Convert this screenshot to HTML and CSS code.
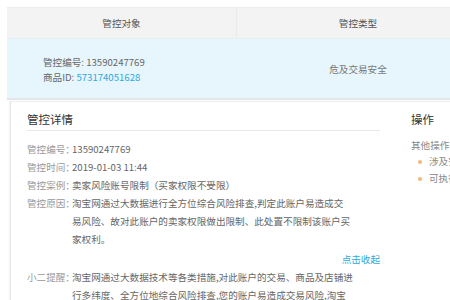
FILE: index.html
```html
<!DOCTYPE html>
<html lang="zh">
<head>
<meta charset="utf-8">
<link rel="stylesheet" href="styles.css">
</head>
<body>
<div class="page">
  <div class="table">
    <div class="row head">
      <div class="cell c1">管控对象</div>
      <div class="cell c2">管控类型</div>
    </div>
    <div class="row body">
      <div class="cell c1 obj">
        <div>管控编号: 13590247769</div>
        <div>商品ID: <span class="link">573174051628</span></div>
      </div>
      <div class="cell c2">危及交易安全</div>
    </div>
  </div>
  <div class="panel">
    <div class="detail">
      <div class="title">管控详情</div>
      <div class="item"><span class="lab">管控编号：</span><span class="val">13590247769</span></div>
      <div class="item"><span class="lab">管控时间：</span><span class="val">2019-01-03 11:44</span></div>
      <div class="item"><span class="lab">管控案例：</span><span class="val">卖家风险账号限制（买家权限不受限）</span></div>
      <div class="item"><span class="lab">管控原因：</span><span class="val">淘宝网通过大数据进行全方位综合风险排查,判定此账户易造成交<br>易风险、故对此账户的卖家权限做出限制、此处置不限制该账户买<br>家权利。</span></div>
      <div class="toggle"><span class="link">点击收起</span></div>
      <div class="item"><span class="lab">小二提醒：</span><span class="val">淘宝网通过大数据技术等各类措施,对此账户的交易、商品及店铺进<br>行多纬度、全方位地综合风险排查,您的账户易造成交易风险,淘宝</span></div>
    </div>
    <div class="ops">
      <div class="title">操作</div>
      <div class="other">其他操作</div>
      <ul class="bul">
        <li>涉及安全问题</li>
        <li>可执行操作</li>
      </ul>
    </div>
  </div>
</div>
</body>
</html>
```
FILE: styles.css
```css
html, body {
  margin: 0;
  padding: 0;
  background: #fff;
  overflow: hidden;
}
body {
  font-family: "Noto Sans CJK SC", "Noto Sans", sans-serif;
  font-size: 9.6px;
  color: #666;
  width: 450px;
  height: 300px;
}
.page {
  padding: 7px 0 0 7px;
  width: 520px;
}
.table {
  width: 472px;
  border-bottom: 2px solid #e3e6e8;
}
.row {
  display: flex;
}
.cell {
  box-sizing: border-box;
}
.c1 { width: 230px; }
.c2 { width: 242px; }
.head {
  height: 30px;
  background: #f3f3f3;
  border-bottom: 1px solid #e6eef2;
  border-top: 1px solid #ececec;
}
.head .cell {
  display: flex;
  align-items: center;
  justify-content: center;
  color: #555;
}
.head .c1 { border-right: 1px solid #ebebeb; }
.body {
  height: 59px;
  background: #e7f6fd;
}
.body .c2 {
  display: flex;
  align-items: center;
  justify-content: center;
  color: #777;
}
.obj {
  padding: 16px 0 0 36px;
  line-height: 15px;
  color: #666;
}
.link { color: #2fa8dc; }
.panel {
  display: flex;
  margin: 1px 0 0 3px;
  border-left: 1px solid #e4e4e4;
  border-top: 1px solid #eeeeee;
  box-shadow: -1px 0 2px rgba(0,0,0,0.05);
  height: 220px;
}
.detail {
  width: 353px;
  padding: 8px 0 0 16px;
}
.title {
  font-size: 11.5px;
  color: #333;
  line-height: 19px;
  padding-bottom: 1px;
}
.detail .title {
  border-bottom: 1px solid #e8e8e8;
  margin-bottom: 9px;
}
.item {
  display: flex;
  line-height: 18px;
}
.lab {
  color: #999;
  width: 45px;
  flex: none;
  white-space: nowrap;
}
.val {
  color: #666;
  white-space: nowrap;
}
.toggle {
  text-align: right;
  line-height: 18px;
  margin-top: 2px;
}
.ops {
  padding: 8px 0 0 31px;
  white-space: nowrap;
}
.ops .title {
  margin-bottom: 8px;
}
.other {
  color: #888;
  line-height: 15px;
}
.bul {
  list-style: none;
  margin: 0;
  padding: 0 0 0 7px;
}
.bul li {
  line-height: 17px;
  color: #888;
  display: flex;
  align-items: center;
}
.bul li::before {
  content: "";
  width: 4px;
  height: 4px;
  border-radius: 50%;
  background: #f5b77a;
  margin-right: 7px;
}
```
